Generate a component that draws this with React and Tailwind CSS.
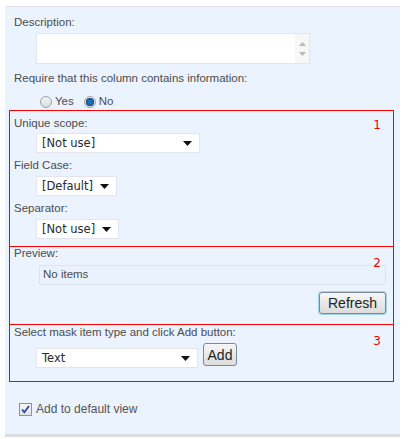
import React from 'react';

const label = "text-[11.5px] leading-[13px] text-[#4c4c4c] whitespace-nowrap";
const selectFont = { fontFamily: '"DejaVu Sans", Verdana, sans-serif' };

const Caret = () => (
  <svg width="9" height="5" viewBox="0 0 9 5" className="shrink-0">
    <path d="M0 0h9L4.5 5z" fill="#111" />
  </svg>
);

const Select = ({ value, width }) => (
  <div
    className="flex items-center h-[20px] bg-white border border-[#e2e6ec] pl-[5px] pr-[7px] text-[11.5px] leading-[14px] text-[#2a2a2a]"
    style={{ ...selectFont, width }}
  >
    <span className="flex-1 whitespace-nowrap">{value}</span>
    <Caret />
  </div>
);

const Radio = ({ checked }) => (
  <span className="inline-flex items-center justify-center w-[12px] h-[12px] rounded-full border border-[#9aa4ad] bg-gradient-to-b from-[#f4f4f4] to-[#d9dde0]">
    {checked && <span className="w-[6px] h-[6px] rounded-full bg-[#1b6fb8] ring-1 ring-[#0a3e70]" />}
  </span>
);

const Num = ({ n }) => (
  <span className="block text-[12px] leading-[12px] text-[#ee0000]" style={selectFont}>{n}</span>
);

const Button = ({ children, className }) => (
  <div
    className={`flex items-center justify-center border border-[#7b8a99] rounded-[3px] bg-gradient-to-b from-[#f6f6f6] to-[#dcdcdc] text-[14px] leading-none text-[#222] ${className}`}
    style={{ fontFamily: '"Liberation Sans", Arial, sans-serif' }}
  >
    {children}
  </div>
);

export default function App() {
  return (
    <div
      className="w-[408px] h-[439px] bg-white pt-[6px] pl-[5px]"
      style={{ fontFamily: '"Liberation Sans", Tahoma, Arial, sans-serif' }}
    >
      <div className="w-[395px] h-[428px] bg-[#ebf3fe] border-t border-[#dfe3e8] flex flex-col">
        <div className="pl-[9px] pt-[9px]">
          <div className={label}>Description:</div>
          <div className="ml-[22px] mt-[4px] w-[274px] h-[31px] bg-white border border-[#e3e6ea] flex justify-end">
            <div className="w-[14px] flex flex-col items-center justify-center gap-[6px] bg-[#f7f7f7]">
              <svg width="7" height="4" viewBox="0 0 7 4"><path d="M3.5 0L7 4H0z" fill="#b9b9b9" /></svg>
              <svg width="7" height="4" viewBox="0 0 7 4"><path d="M0 0h7L3.5 4z" fill="#b9b9b9" /></svg>
            </div>
          </div>
          <div className={`${label} mt-[8px]`}>Require that this column contains information:</div>
          <div className="flex items-center h-[13px] gap-[3px] ml-[26px] mt-[10px] text-[11.5px] leading-[13px] text-[#4c4c4c]">
            <Radio />
            <span className="mr-[7px]">Yes</span>
            <Radio checked />
            <span>No</span>
          </div>
        </div>

        <div className="ml-[4px] mt-[2px] w-[385px]">
          <div className="border border-[#ff0000] h-[137px] pl-[4px] pt-[6px] relative">
            <div className="absolute right-[12px] top-[8px]"><Num n="1" /></div>
            <div className={label}>Unique scope:</div>
            <div className="ml-[22px] mt-[3px]"><Select value="[Not use]" width={164} /></div>
            <div className={`${label} mt-[6px]`}>Field Case:</div>
            <div className="ml-[22px] mt-[4px]"><Select value="[Default]" width={81} /></div>
            <div className={`${label} mt-[6px]`}>Separator:</div>
            <div className="ml-[22px] mt-[4px]"><Select value="[Not use]" width={83} /></div>
          </div>

          <div className="border border-t-0 border-[#ff0000] h-[78px] pl-[4px] pt-0 relative">
            <div className="absolute right-[12px] top-[10px]"><Num n="2" /></div>
            <div className={label}>Preview:</div>
            <div className="ml-[25px] mt-[5px] w-[347px] h-[20px] border border-[#dce3eb] rounded-[2px] bg-[#eaf2fd] flex items-center pl-[3px] text-[11.5px] text-[#4c4c4c]">
              No items
            </div>
            <div className="flex justify-end pr-[7px] mt-[7px]">
              <Button className="w-[67px] h-[22px] shadow-[0_0_0_1px_#9fd3ee]">Refresh</Button>
            </div>
          </div>

          <div className="border border-t-0 border-[#ff0000] h-[57px] pl-[4px] pt-[1px] relative">
            <div className="absolute right-[12px] top-[10px]"><Num n="3" /></div>
            <div className={label}>Select mask item type and click Add button:</div>
            <div className="flex items-start ml-[22px] mt-[4px] gap-[5px]">
              <div className="mt-[5px]"><Select value="Text" width={162} /></div>
              <Button className="w-[34px] h-[23px]">Add</Button>
            </div>
          </div>
        </div>

        <div className="flex items-center gap-[4px] ml-[14px] mt-[21px] text-[12px] leading-[13px] text-[#555]">
          <span className="w-[13px] h-[13px] border border-[#8a949c] bg-gradient-to-b from-[#f7f7f7] to-[#dfe2e5] flex items-center justify-center">
            <svg width="9" height="9" viewBox="0 0 9 9"><path d="M1 4.5l2.3 2.7L8 1" stroke="#2a4d9c" strokeWidth="1.8" fill="none" /></svg>
          </span>
          <span>Add to default view</span>
        </div>
      </div>
      <div className="w-[395px] h-[3px] bg-[#dcdcdc]" />
    </div>
  );
}
